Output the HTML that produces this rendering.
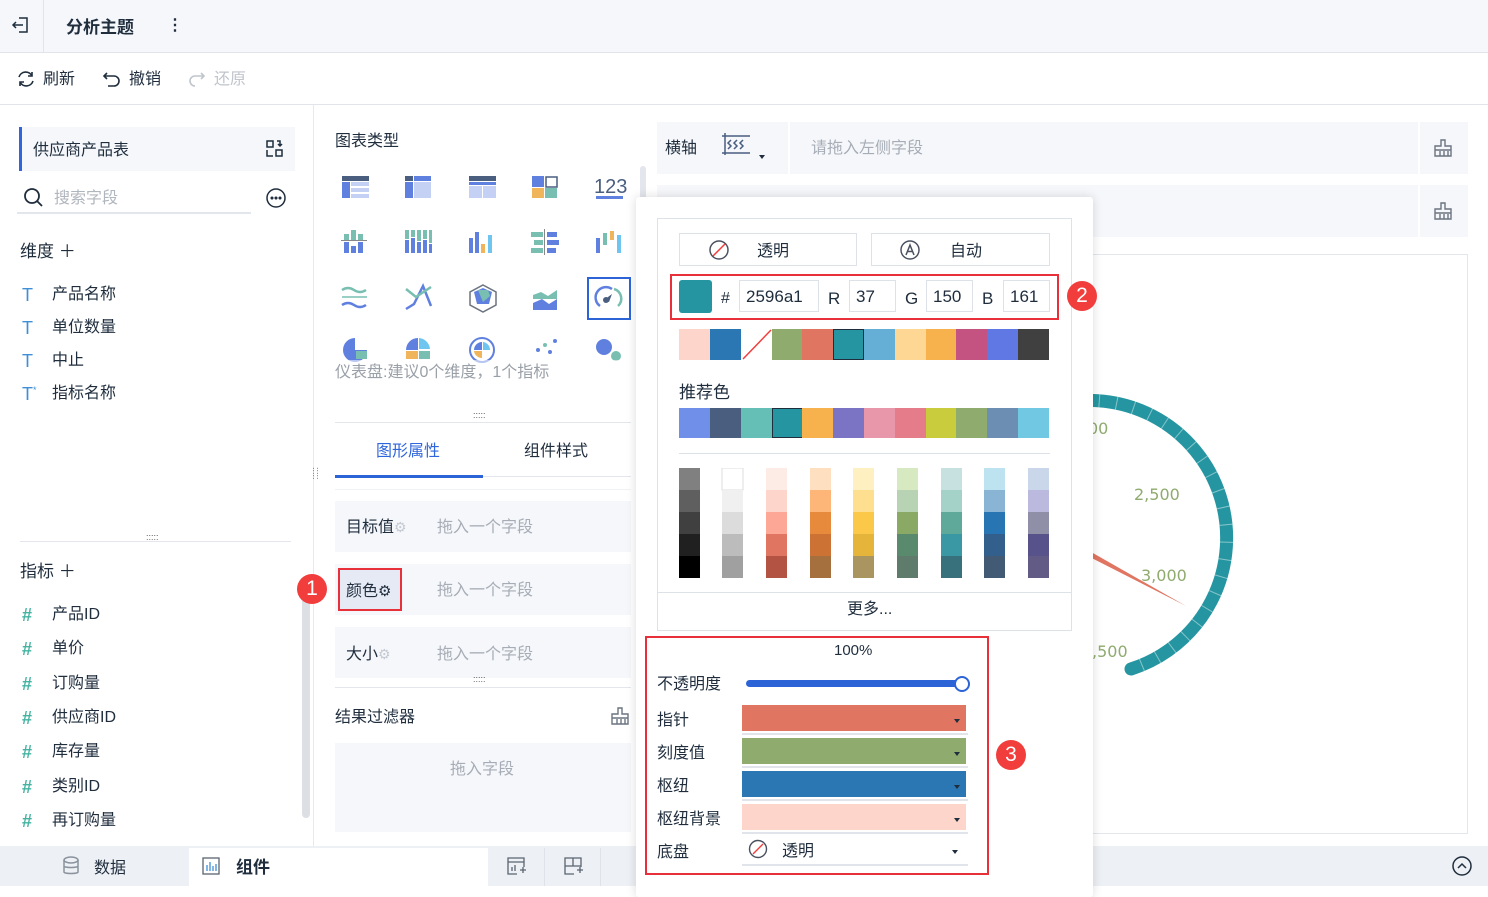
<!DOCTYPE html>
<html><head><meta charset="utf-8"><style>
*{box-sizing:border-box;margin:0;padding:0}
body{width:1488px;height:886px;position:relative;overflow:hidden;background:#fff;font-family:"Liberation Sans","Noto Sans CJK SC",sans-serif;font-size:16px;color:#1f2d3d}
.a{position:absolute}
.t{position:absolute;white-space:nowrap;line-height:1;transform:translateY(2px)}
.g{color:#a7adb6}
.row{position:absolute;background:#f5f7fb}
.sw{position:absolute;height:31px;top:329px;width:31px}
.rc{position:absolute;height:30px;top:408px;width:31px}
.badge{position:absolute;width:30px;height:30px;border-radius:50%;background:#f23d3d;color:#fff;font-size:21px;text-align:center;line-height:30px}
.ipt{position:absolute;height:32px;top:280px;border:1px solid #dde1e8;font-size:17px;line-height:32px;padding-left:6px;color:#1f2d3d}
.cb{position:absolute;left:742px;width:224px;height:26px}
.cb:after{content:"";position:absolute;right:6px;top:14px;border:3px solid transparent;border-top:4px solid #1f2d3d}
.ul{position:absolute;left:742px;width:226px;height:2px;background:#e1e4ea}
.hs{font-weight:bold}
</style></head><body>

<!-- top bar -->
<div class="a" style="left:0;top:0;width:1488px;height:53px;background:#f5f7fb;border-bottom:1px solid #e1e4ea"></div>
<div class="a" style="left:43px;top:0;width:1px;height:53px;background:#e1e4ea"></div>
<svg class="a" style="left:11px;top:15px" width="20" height="20" viewBox="0 0 20 20" fill="none" stroke="#1f2d3d" stroke-width="1.5"><path d="M8 3h8v14H8"/><path d="M12 10H2M5 7l-3 3 3 3"/></svg>
<div class="t" style="left:66px;top:17px;font-weight:bold;font-size:17px">分析主题</div>
<div class="t" style="left:167px;top:16px;font-weight:bold">⋮</div>

<!-- toolbar -->
<div class="a" style="left:0;top:104px;width:1488px;height:1px;background:#e1e4ea"></div>
<svg class="a" style="left:16px;top:69px" width="20" height="20" viewBox="0 0 20 20" fill="none" stroke="#1f2d3d" stroke-width="1.6"><path d="M16 7a7 7 0 0 0-13 1M4 13a7 7 0 0 0 13-1"/><path d="M16 3v4h-4M4 17v-4h4"/></svg>
<div class="t" style="left:43px;top:70px">刷新</div>
<svg class="a" style="left:102px;top:69px" width="20" height="20" viewBox="0 0 20 20" fill="none" stroke="#1f2d3d" stroke-width="1.6"><path d="M5 4L2 7l3 3"/><path d="M2 7h10a5 5 0 0 1 0 10H6"/></svg>
<div class="t" style="left:129px;top:70px">撤销</div>
<svg class="a" style="left:187px;top:69px" width="20" height="20" viewBox="0 0 20 20" fill="none" stroke="#c0c5cc" stroke-width="1.6"><path d="M14 4l3 3-3 3"/><path d="M17 7H8a5 5 0 0 0 0 10"/></svg>
<div class="t" style="left:214px;top:70px;color:#c0c5cc">还原</div>

<!-- left panel -->
<div class="a" style="left:313px;top:105px;width:1px;height:741px;background:#e7e9ee"></div>
<div class="a" style="left:19px;top:127px;width:276px;height:44px;background:#f5f7fb;border-left:3px solid #3066dc"></div>
<div class="t" style="left:33px;top:141px">供应商产品表</div>
<svg class="a" style="left:265px;top:139px" width="20" height="20" viewBox="0 0 20 20" fill="none" stroke="#1f2d3d" stroke-width="1.5"><rect x="2" y="2" width="6" height="6"/><rect x="11" y="11" width="6" height="6"/><path d="M2 11v6h6M12 2l3 0 0 5M13 5l2 2 2-2"/></svg>
<svg class="a" style="left:23px;top:187px" width="22" height="22" viewBox="0 0 22 22" fill="none" stroke="#1f2d3d" stroke-width="1.8"><circle cx="9" cy="9" r="7"/><path d="M14 14l5 5"/></svg>
<div class="t g" style="left:54px;top:189px;color:#b0b6be">搜索字段</div>
<div class="a" style="left:17px;top:212px;width:234px;height:2px;background:#e3e6ec"></div>
<svg class="a" style="left:265px;top:187px" width="22" height="22" viewBox="0 0 22 22" fill="none" stroke="#1f2d3d" stroke-width="1.5"><circle cx="11" cy="11" r="9"/><circle cx="7" cy="11" r=".8" fill="#1f2d3d"/><circle cx="11" cy="11" r=".8" fill="#1f2d3d"/><circle cx="15" cy="11" r=".8" fill="#1f2d3d"/></svg>
<div class="t" style="left:20px;top:241px;font-size:17px">维度 ＋</div>
<div class="t" style="left:22px;top:284px;color:#3e8fd8;font-size:18px">T</div><div class="t" style="left:52px;top:285px">产品名称</div>
<div class="t" style="left:22px;top:317px;color:#3e8fd8;font-size:18px">T</div><div class="t" style="left:52px;top:318px">单位数量</div>
<div class="t" style="left:22px;top:350px;color:#3e8fd8;font-size:18px">T</div><div class="t" style="left:52px;top:351px">中止</div>
<div class="t" style="left:22px;top:383px;color:#3e8fd8;font-size:18px">T<sup style="font-size:9px">*</sup></div><div class="t" style="left:52px;top:384px">指标名称</div>
<div class="t" style="left:146px;top:531px;font-size:9px;color:#555">:::::</div>
<div class="a" style="left:20px;top:541px;width:271px;height:1px;background:#e3e6ec"></div>
<div class="t" style="left:20px;top:561px;font-size:17px">指标 ＋</div>
<div class="t hs" style="left:22px;top:604px;color:#45b3a1;font-size:18px">#</div><div class="t" style="left:52px;top:605px">产品ID</div>
<div class="t hs" style="left:22px;top:638px;color:#45b3a1;font-size:18px">#</div><div class="t" style="left:52px;top:639px">单价</div>
<div class="t hs" style="left:22px;top:673px;color:#45b3a1;font-size:18px">#</div><div class="t" style="left:52px;top:674px">订购量</div>
<div class="t hs" style="left:22px;top:707px;color:#45b3a1;font-size:18px">#</div><div class="t" style="left:52px;top:708px">供应商ID</div>
<div class="t hs" style="left:22px;top:741px;color:#45b3a1;font-size:18px">#</div><div class="t" style="left:52px;top:742px">库存量</div>
<div class="t hs" style="left:22px;top:776px;color:#45b3a1;font-size:18px">#</div><div class="t" style="left:52px;top:777px">类别ID</div>
<div class="t hs" style="left:22px;top:810px;color:#45b3a1;font-size:18px">#</div><div class="t" style="left:52px;top:811px">再订购量</div>
<div class="a" style="left:302px;top:580px;width:8px;height:238px;background:#dcdfe4;border-radius:4px"></div>
<div class="t" style="left:311px;top:465px;font-size:9px;color:#555;writing-mode:vertical-lr">:::::</div>

<!-- bottom bar -->
<div class="a" style="left:0;top:846px;width:1488px;height:40px;background:#edf0f5"></div>
<div class="a" style="left:189px;top:848px;width:299px;height:38px;background:#fff"></div>
<svg class="a" style="left:62px;top:856px" width="18" height="20" viewBox="0 0 18 20" fill="none" stroke="#8a929c" stroke-width="1.5"><ellipse cx="9" cy="4" rx="7" ry="3"/><path d="M2 4v12c0 2 14 2 14 0V4M2 10c0 2 14 2 14 0"/></svg>
<div class="t" style="left:94px;top:859px">数据</div>
<svg class="a" style="left:201px;top:856px" width="20" height="20" viewBox="0 0 20 20" fill="none" stroke="#5a6470" stroke-width="1.3"><rect x="2" y="2" width="16" height="16"/><path d="M6 15V9M9 15V6M12 15V10M15 15V8" stroke="#3e8fd8"/></svg>
<div class="t" style="left:236px;top:857px;font-weight:bold;font-size:17px">组件</div>
<div class="a" style="left:544px;top:848px;width:1px;height:38px;background:#dfe2e8"></div>
<div class="a" style="left:600px;top:848px;width:1px;height:38px;background:#dfe2e8"></div>
<svg class="a" style="left:506px;top:856px" width="20" height="20" viewBox="0 0 20 20" fill="none" stroke="#5a6470" stroke-width="1.3"><path d="M11 18H2V2h16v9M2 6h16M6 15v-4M9 15v-6M14 14h6M17 11v6"/></svg>
<svg class="a" style="left:563px;top:856px" width="20" height="20" viewBox="0 0 20 20" fill="none" stroke="#5a6470" stroke-width="1.3"><path d="M11 18H2V2h16v9M2 10h16M10 2v8M14 14h6M17 11v6"/></svg>
<svg class="a" style="left:1451px;top:855px" width="22" height="22" viewBox="0 0 22 22" fill="none" stroke="#1f2d3d" stroke-width="1.5"><circle cx="11" cy="11" r="9"/><path d="M7 13l4-4 4 4"/></svg>

<!-- middle panel -->
<div class="t" style="left:335px;top:132px">图表类型</div>
<div class="a" style="left:640px;top:166px;width:6px;height:40px;background:#e3e6ec;border-radius:3px"></div>
<svg class="a" style="left:338px;top:170px" width="300" height="210" viewBox="338 170 300 210">
<g><rect x="342" y="176" width="27" height="5" fill="#4a5e80"/><rect x="342" y="182" width="8" height="16" fill="#6080e0"/><rect x="351" y="182" width="18" height="4" fill="#c5d0f5"/><rect x="351" y="188" width="18" height="4" fill="#c5d0f5"/><rect x="351" y="194" width="18" height="4" fill="#c5d0f5"/></g>
<g><rect x="405" y="176" width="8" height="5" fill="#4a5e80"/><rect x="414" y="176" width="17" height="5" fill="#6080e0"/><rect x="405" y="182" width="8" height="16" fill="#6080e0"/><rect x="414" y="182" width="17" height="16" fill="#c5d0f5"/></g>
<g><rect x="469" y="176" width="27" height="5" fill="#4a5e80"/><rect x="469" y="182" width="27" height="3" fill="#6080e0"/><rect x="469" y="186" width="13" height="12" fill="#c5d0f5"/><rect x="483" y="186" width="13" height="12" fill="#c5d0f5"/></g>
<g><rect x="532" y="176" width="12" height="11" fill="#6080e0"/><rect x="546" y="177" width="11" height="10" fill="none" stroke="#4a5e80" stroke-width="1.5"/><rect x="532" y="188" width="12" height="10" fill="#f0b45a"/><rect x="545" y="188" width="12" height="10" fill="#78bfb2"/></g>
<text x="594" y="193" font-size="20" fill="#4a5e80" font-family="Liberation Sans">123</text><rect x="596" y="196" width="27" height="3" fill="#6080e0"/>
<g fill="#6080e0"><rect x="344" y="242" width="5" height="11"/><rect x="351" y="246" width="5" height="7"/><rect x="358" y="242" width="5" height="11"/></g><g fill="#78bfb2"><rect x="344" y="234" width="5" height="6"/><rect x="351" y="230" width="5" height="10"/><rect x="358" y="234" width="5" height="6"/></g><rect x="341" y="240" width="26" height="1" fill="#888"/>
<g fill="#6080e0"><rect x="405" y="240" width="4" height="13"/><rect x="411" y="238" width="4" height="15"/><rect x="417" y="242" width="4" height="11"/><rect x="423" y="240" width="4" height="13"/><rect x="429" y="244" width="3" height="9"/></g><g fill="#78bfb2"><rect x="405" y="230" width="4" height="9"/><rect x="411" y="230" width="4" height="7"/><rect x="417" y="230" width="4" height="11"/><rect x="423" y="230" width="4" height="9"/><rect x="429" y="230" width="3" height="13"/></g>
<g><rect x="469" y="238" width="4" height="15" fill="#6080e0"/><rect x="475" y="232" width="4" height="21" fill="#6080e0"/><rect x="481" y="244" width="4" height="9" fill="#f0b45a"/><rect x="488" y="235" width="4" height="18" fill="#6ec6f0"/></g>
<g><rect x="531" y="232" width="12" height="5" fill="#78bfb2"/><rect x="547" y="232" width="10" height="5" fill="#6080e0"/><rect x="534" y="240" width="9" height="5" fill="#78bfb2"/><rect x="547" y="240" width="12" height="5" fill="#6080e0"/><rect x="531" y="248" width="12" height="5" fill="#78bfb2"/><rect x="547" y="248" width="9" height="5" fill="#6080e0"/><rect x="544" y="229" width="1" height="26" fill="#888"/></g>
<g><rect x="596" y="238" width="4" height="15" fill="#6080e0"/><rect x="603" y="233" width="4" height="12" fill="#78bfb2"/><rect x="610" y="231" width="4" height="9" fill="#f0b45a"/><rect x="617" y="235" width="4" height="18" fill="#6ec6f0"/></g>
<g fill="none" stroke-width="2.5"><path d="M342 290q6-4 12 0t12 0" stroke="#78bfb2"/><path d="M342 297h25" stroke="#78bfb2" stroke-width="1.5"/><path d="M342 305q6-4 12 0t12 0" stroke="#6080e0"/></g>
<g fill="none" stroke-width="2.5"><path d="M406 309l8-5 9-18 8 20" stroke="#6080e0"/><path d="M406 289l10 8 15-10" stroke="#78bfb2"/></g>
<g><path d="M483 285l13 7v13l-13 7-13-7v-13z" fill="none" stroke="#6b7480" stroke-width="1.5"/><path d="M474 292l9-4 9 4-3 12h-12z" fill="#6080e0"/><path d="M478 290l10 0 2 6-7 6z" fill="#78bfb2"/></g>
<g><path d="M533 295l8-3 7 4 9-6v9h-24z" fill="#78bfb2"/><path d="M533 303l9-4 7 5 8-5v11h-24z" fill="#6080e0"/></g>
<g fill="none" stroke-width="2.5"><path d="M600 306a10 10 0 0 1 12-17" stroke="#6080e0"/><path d="M614 289a10 10 0 0 1 4 17" stroke="#78bfb2"/></g><path d="M604 300l8-6-3 8z" fill="#4a5e80"/><circle cx="606" cy="300" r="3" fill="#4a5e80"/>
<g><path d="M355 350v-12a12 12 0 1 0 12 12z" fill="#6080e0"/><rect x="356" y="351" width="11" height="8" fill="#78bfb2"/></g>
<g><path d="M418 350v-12a12 12 0 0 0-12 12z" fill="#6080e0"/><path d="M419 338a12 12 0 0 1 11 11h-11z" fill="#6ec6f0"/><rect x="406" y="351" width="12" height="8" fill="#f0b45a"/><rect x="419" y="351" width="11" height="8" fill="#78bfb2"/></g>
<g><circle cx="482" cy="350" r="12" fill="none" stroke="#6080e0" stroke-width="2"/><path d="M482 350v-8a8 8 0 0 0-8 8z" fill="#6080e0"/><path d="M483 342a8 8 0 0 1 7 8h-7z" fill="#6ec6f0"/><path d="M474 351h8v7a8 8 0 0 1-8-7z" fill="#f0b45a"/></g>
<g fill="#6080e0"><circle cx="538" cy="350" r="2"/><circle cx="545" cy="345" r="2" fill="#78bfb2"/><circle cx="555" cy="341" r="2"/><circle cx="550" cy="352" r="2"/></g>
<g><circle cx="604" cy="347" r="8" fill="#6080e0"/><circle cx="616" cy="356" r="5" fill="#78bfb2"/></g>
</svg>
<div class="a" style="left:587px;top:277px;width:44px;height:43px;border:2px solid #2c64d8"></div>
<div class="a" style="left:320px;top:360px;width:320px;height:20px;background:rgba(255,255,255,.55)"></div>
<div class="t" style="left:335px;top:363px;color:#9aa0a8">仪表盘:建议0个维度，1个指标</div>
<div class="t" style="left:473px;top:409px;font-size:9px;color:#555">:::::</div>
<div class="a" style="left:335px;top:422px;width:296px;height:1px;background:#e3e6ec"></div>
<div class="t" style="left:376px;top:442px;color:#3066dc">图形属性</div>
<div class="t" style="left:524px;top:442px">组件样式</div>
<div class="a" style="left:335px;top:476px;width:296px;height:1px;background:#e3e6ec"></div>
<div class="a" style="left:335px;top:475px;width:148px;height:3px;background:#2c64d8"></div>
<div class="a" style="left:335px;top:489px;width:296px;height:1px;background:#f0f2f5"></div>
<div class="row" style="left:335px;top:501px;width:296px;height:51px"></div>
<div class="t" style="left:346px;top:518px">目标值<span style="color:#c5cad2;font-size:14px">⚙</span></div>
<div class="t g" style="left:437px;top:518px">拖入一个字段</div>
<div class="row" style="left:335px;top:564px;width:296px;height:51px"></div>
<div class="a" style="left:338px;top:568px;width:64px;height:43px;background:#e5eaf5;border:2px solid #e8303a"></div>
<div class="t" style="left:346px;top:582px">颜色<span style="font-size:15px">⚙</span></div>
<div class="t g" style="left:437px;top:581px">拖入一个字段</div>
<div class="badge" style="left:297px;top:574px">1</div>
<div class="row" style="left:335px;top:627px;width:296px;height:51px"></div>
<div class="t" style="left:346px;top:645px">大小<span style="color:#c5cad2;font-size:14px">⚙</span></div>
<div class="t g" style="left:437px;top:645px">拖入一个字段</div>
<div class="t" style="left:473px;top:673px;font-size:9px;color:#555">:::::</div>
<div class="a" style="left:335px;top:687px;width:296px;height:1px;background:#e3e6ec"></div>
<div class="t" style="left:335px;top:708px">结果过滤器</div>
<svg class="a" style="left:610px;top:706px" width="20" height="20" viewBox="0 0 20 20" fill="none" stroke="#6b7480" stroke-width="1.4"><path d="M8 2h4v6h6v10H2V8h6z"/><path d="M2 12h16M7 13v5M11 13v5M15 13v5"/></svg>
<div class="row" style="left:335px;top:743px;width:296px;height:89px"></div>
<div class="t g" style="left:450px;top:760px">拖入字段</div>

<!-- right area -->
<div class="row" style="left:657px;top:122px;width:811px;height:52px"></div>
<div class="a" style="left:788px;top:122px;width:2px;height:52px;background:#fff"></div>
<div class="a" style="left:1418px;top:122px;width:2px;height:52px;background:#fff"></div>
<div class="t" style="left:665px;top:139px">横轴</div>
<svg class="a" style="left:722px;top:133px" width="48" height="30" viewBox="0 0 48 30" fill="none" stroke="#4a5e80" stroke-width="1.5"><path d="M3 0v22M0 3h28M0 20h28"/><path d="M9 7l-3 3 3 3-3 3M15 7l-3 3 3 3-3 3M21 7l-3 3 3 3-3 3"/><path d="M37 22l3 4 3-4z" fill="#1f2d3d" stroke="none"/></svg>
<div class="t g" style="left:811px;top:139px">请拖入左侧字段</div>
<svg class="a" style="left:1433px;top:138px" width="20" height="20" viewBox="0 0 20 20" fill="none" stroke="#6b7480" stroke-width="1.4"><path d="M8 2h4v6h6v10H2V8h6z"/><path d="M2 12h16M7 13v5M11 13v5M15 13v5"/></svg>
<div class="row" style="left:657px;top:185px;width:811px;height:52px"></div>
<div class="a" style="left:1418px;top:185px;width:2px;height:52px;background:#fff"></div>
<svg class="a" style="left:1433px;top:201px" width="20" height="20" viewBox="0 0 20 20" fill="none" stroke="#6b7480" stroke-width="1.4"><path d="M8 2h4v6h6v10H2V8h6z"/><path d="M2 12h16M7 13v5M11 13v5M15 13v5"/></svg>
<div class="a" style="left:1000px;top:254px;width:468px;height:580px;border:1px solid #e3e6ec"></div>
<svg class="a" style="left:900px;top:380px" width="350" height="320" viewBox="900 380 350 320">
<path d="M1047 407 A137 137 0 1 1 1131 669" fill="none" stroke="#2596a1" stroke-width="13" stroke-linecap="round"/>
<path d="M1047 407 A137 137 0 1 1 1131 669" fill="none" stroke="#fff" stroke-opacity=".45" stroke-width="13" stroke-dasharray="1 16.5"/>
<path d="M1070 540 L1186 606 L1068 546z" fill="#e07561"/>
<g font-family="DejaVu Sans,sans-serif" font-size="16" fill="#8fab6e"><text x="1088" y="434">00</text><text x="1134" y="500">2,500</text><text x="1141" y="581">3,000</text><text x="1092" y="657">,500</text></g>
</svg>

<!-- popup -->
<div class="a" style="left:636px;top:197px;width:457px;height:700px;background:#fff;box-shadow:0 0 10px rgba(0,0,0,.15);border-radius:3px"></div>
<div class="a" style="left:657px;top:218px;width:415px;height:413px;border:1px solid #dde1e8"></div>
<div class="a" style="left:679px;top:233px;width:178px;height:33px;border:1px solid #dde1e8"></div>
<svg class="a" style="left:708px;top:239px" width="22" height="22" viewBox="0 0 22 22" fill="none" stroke-width="1.5"><circle cx="11" cy="11" r="9" stroke="#4a5060"/><path d="M5 17L17 5" stroke="#f23d3d"/></svg>
<div class="t" style="left:757px;top:242px">透明</div>
<div class="a" style="left:871px;top:233px;width:179px;height:33px;border:1px solid #dde1e8"></div>
<svg class="a" style="left:899px;top:239px" width="22" height="22" viewBox="0 0 22 22" fill="none" stroke="#4a5060" stroke-width="1.5"><circle cx="11" cy="11" r="9"/><path d="M7 16l4-10 4 10M8.5 12.5h5"/></svg>
<div class="t" style="left:950px;top:242px">自动</div>
<div class="a" style="left:670px;top:274px;width:389px;height:46px;border:2px solid #e8303a"></div>
<div class="a" style="left:679px;top:280px;width:33px;height:33px;background:#2596a1;border-radius:3px"></div>
<div class="t" style="left:721px;top:289px;font-size:16px">#</div>
<div class="ipt" style="left:739px;width:80px">2596a1</div>
<div class="t" style="left:828px;top:288px;font-size:17px">R</div>
<div class="ipt" style="left:849px;width:47px">37</div>
<div class="t" style="left:905px;top:288px;font-size:17px">G</div>
<div class="ipt" style="left:926px;width:47px">150</div>
<div class="t" style="left:982px;top:288px;font-size:17px">B</div>
<div class="ipt" style="left:1003px;width:47px">161</div>
<div class="badge" style="left:1067px;top:281px">2</div>
<div class="sw" style="left:679px;background:#fdd5cb"></div>
<div class="sw" style="left:710px;background:#2a77b4"></div>
<svg class="sw" style="left:741px;background:#fff" viewBox="0 0 31 31"><path d="M2 30L30 1" stroke="#f23d3d" stroke-width="1.5"/></svg>
<div class="sw" style="left:772px;background:#8fab6e"></div>
<div class="sw" style="left:802px;background:#e07561"></div>
<div class="sw" style="left:833px;background:#2596a1;border:1px solid #1f2d3d"></div>
<div class="sw" style="left:864px;background:#65aed6"></div>
<div class="sw" style="left:895px;background:#fed795"></div>
<div class="sw" style="left:926px;background:#f7b24d"></div>
<div class="sw" style="left:956px;background:#c45381"></div>
<div class="sw" style="left:987px;background:#6078e4"></div>
<div class="sw" style="left:1018px;background:#404040"></div>
<div class="t" style="left:679px;top:382px;font-size:17px">推荐色</div>
<div class="rc" style="left:679px;background:#6f8fe9"></div>
<div class="rc" style="left:710px;background:#4a5e80"></div>
<div class="rc" style="left:741px;background:#66bfb6"></div>
<div class="rc" style="left:772px;background:#2596a1;border:1px solid #1f2d3d"></div>
<div class="rc" style="left:802px;background:#f7b24d"></div>
<div class="rc" style="left:833px;background:#7b74c5"></div>
<div class="rc" style="left:864px;background:#e897aa"></div>
<div class="rc" style="left:895px;background:#e57c89"></div>
<div class="rc" style="left:926px;background:#c8cc3d"></div>
<div class="rc" style="left:956px;background:#8fab6e"></div>
<div class="rc" style="left:987px;background:#6d8eb3"></div>
<div class="rc" style="left:1018px;background:#71c8e3"></div>
<div class="a" style="left:679px;top:453px;width:371px;height:1px;background:#dde1e8"></div>
<div class="a" style="left:658px;top:592px;width:413px;height:1px;background:#dde1e8"></div>
<div class="t" style="left:847px;top:600px">更多...</div>

<div class="a" style="left:645px;top:636px;width:344px;height:239px;border:2px solid #e8303a"></div>
<div class="t" style="left:834px;top:641px;font-size:15px">100%</div>
<div class="t" style="left:657px;top:675px">不透明度</div>
<div class="a" style="left:746px;top:680px;width:216px;height:7px;background:#2c64d8;border-radius:4px"></div>
<div class="a" style="left:954px;top:676px;width:16px;height:16px;border:2px solid #2c64d8;background:#fff;border-radius:50%"></div>
<div class="t" style="left:657px;top:711px">指针</div>
<div class="cb" style="top:705px;background:#e07561"></div><div class="ul" style="top:733px"></div>
<div class="t" style="left:657px;top:744px">刻度值</div>
<div class="cb" style="top:738px;background:#8fab6e"></div><div class="ul" style="top:766px"></div>
<div class="t" style="left:657px;top:777px">枢纽</div>
<div class="cb" style="top:771px;background:#2a77b4"></div><div class="ul" style="top:799px"></div>
<div class="t" style="left:657px;top:810px">枢纽背景</div>
<div class="cb" style="top:804px;background:#fdd5cb"></div><div class="ul" style="top:832px"></div>
<div class="t" style="left:657px;top:843px">底盘</div>
<svg class="a" style="left:748px;top:839px" width="20" height="20" viewBox="0 0 20 20" fill="none" stroke-width="1.4"><circle cx="10" cy="10" r="8.5" stroke="#4a5060"/><path d="M5 15L15 5" stroke="#f23d3d"/></svg>
<div class="t" style="left:782px;top:842px">透明</div>
<div class="a" style="left:952px;top:850px;border:3px solid transparent;border-top:4px solid #1f2d3d"></div>
<div class="ul" style="top:864px"></div>
<div class="badge" style="left:996px;top:740px">3</div>

<div class="a" style="left:679px;top:468px;width:371px;height:110px">
<svg width="371" height="110" viewBox="0 0 371 110">
<g><rect x="0" y="0" width="21" height="22" fill="#808080"/><rect x="0" y="22" width="21" height="22" fill="#5f5f5f"/><rect x="0" y="44" width="21" height="22" fill="#404040"/><rect x="0" y="66" width="21" height="22" fill="#202020"/><rect x="0" y="88" width="21" height="22" fill="#000"/></g>
<g transform="translate(43 0)"><rect width="21" height="22" fill="#fff" stroke="#ddd"/><rect y="22" width="21" height="22" fill="#f0f0f0"/><rect y="44" width="21" height="22" fill="#dcdcdc"/><rect y="66" width="21" height="22" fill="#bcbcbc"/><rect y="88" width="21" height="22" fill="#a0a0a0"/></g>
<g transform="translate(87 0)"><rect width="21" height="22" fill="#fdebe6"/><rect y="22" width="21" height="22" fill="#fdd5cb"/><rect y="44" width="21" height="22" fill="#fda896"/><rect y="66" width="21" height="22" fill="#e07561"/><rect y="88" width="21" height="22" fill="#b35343"/></g>
<g transform="translate(131 0)"><rect width="21" height="22" fill="#fedfbf"/><rect y="22" width="21" height="22" fill="#fdb578"/><rect y="44" width="21" height="22" fill="#e88a3c"/><rect y="66" width="21" height="22" fill="#cc7235"/><rect y="88" width="21" height="22" fill="#a6703e"/></g>
<g transform="translate(174 0)"><rect width="21" height="22" fill="#fff0c2"/><rect y="22" width="21" height="22" fill="#fedf8f"/><rect y="44" width="21" height="22" fill="#fcc84a"/><rect y="66" width="21" height="22" fill="#e5b53b"/><rect y="88" width="21" height="22" fill="#aa9460"/></g>
<g transform="translate(218 0)"><rect width="21" height="22" fill="#d6e9c1"/><rect y="22" width="21" height="22" fill="#b8d2b4"/><rect y="44" width="21" height="22" fill="#8aa965"/><rect y="66" width="21" height="22" fill="#5a8a6e"/><rect y="88" width="21" height="22" fill="#5e7b6c"/></g>
<g transform="translate(262 0)"><rect width="21" height="22" fill="#c7e0e0"/><rect y="22" width="21" height="22" fill="#a5d2c8"/><rect y="44" width="21" height="22" fill="#5ea99a"/><rect y="66" width="21" height="22" fill="#3998a3"/><rect y="88" width="21" height="22" fill="#38707c"/></g>
<g transform="translate(305 0)"><rect width="21" height="22" fill="#bde3f0"/><rect y="22" width="21" height="22" fill="#8ab4d4"/><rect y="44" width="21" height="22" fill="#2775b2"/><rect y="66" width="21" height="22" fill="#325f8c"/><rect y="88" width="21" height="22" fill="#435a75"/></g>
<g transform="translate(349 0)"><rect width="21" height="22" fill="#cad6e9"/><rect y="22" width="21" height="22" fill="#bcb9df"/><rect y="44" width="21" height="22" fill="#8f8fa8"/><rect y="66" width="21" height="22" fill="#575289"/><rect y="88" width="21" height="22" fill="#625b85"/></g>
</svg></div>
</body></html>
